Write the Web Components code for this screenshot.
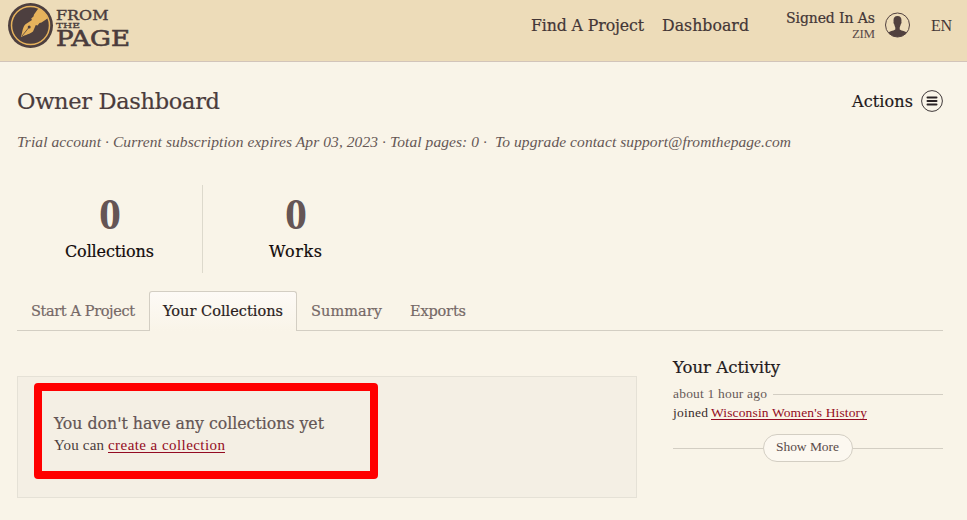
<!DOCTYPE html>
<html lang="en">
<head>
<meta charset="utf-8">
<title>Owner Dashboard</title>
<style>
html,body{margin:0;background:#f9f4e8}
body{width:967px;height:520px;overflow:hidden;color:#4a3c3c;font-family:"Liberation Serif",serif}
</style>
</head>
<body>
<owner-page></owner-page>
<script>
/* One line of text whose tracking is set so that it fills the width attribute. */
class FitText extends HTMLElement {
  connectedCallback() {
    const w = +this.getAttribute('w'), size = this.getAttribute('size'), lh = this.getAttribute('lh');
    const slab = this.getAttribute('slab');
    const family = slab === 'wide' ? '"DejaVu Serif",serif' : '"DejaVu Serif Condensed","DejaVu Serif",serif';
    const root = this.attachShadow({mode: 'open'});
    root.innerHTML = `<style>
      :host{display:block;flex:none;width:${w}px;height:${lh}px;line-height:${lh}px;font-size:${size}px;white-space:pre;
        ${slab !== null ? `font-family:${family};-webkit-text-stroke:.2px currentColor;` : ''}
        ${slab !== null && slab !== 'wide' ? 'font-stretch:condensed;' : ''}}
      span{display:inline-block}
      </style><span><slot></slot></span>`;
    const span = root.querySelector('span');
    const n = this.textContent.length;
    const natural = span.getBoundingClientRect().width;
    if (n > 1) span.style.letterSpacing = ((w - natural) / (n - 1)) + 'px';
  }
}

class SiteLogo extends HTMLElement {
  connectedCallback() {
    this.attachShadow({mode: 'open'}).innerHTML = `<style>
      :host{display:block;width:130px;height:50px}
      svg{display:block} text{font-family:"DejaVu Serif",serif;fill:#4a3c3c;stroke:#4a3c3c}
      </style>
      <svg width="130" height="50" viewBox="0 0 130 50">
        <circle cx="30.500" cy="25.500" r="22.500" fill="#4d3f3f"/>
        <circle cx="30.500" cy="25.500" r="19" fill="none" stroke="#e6b25c" stroke-width="1.500"/>
        <path d="M21 37C22.500 32 22.800 26.500 25.500 24.300L32 20L31.200 18.500L33.500 16.500L34 14.500L38.500 8.300A19 19 0 0 1 47.800 18.300L41.500 22.500L39.500 23L37.500 25.500L35.800 25L33 31.500C30.500 34 25.500 34.800 21 37Z" fill="#e6b25c"/>
        <path d="M22 36L29 27.300" stroke="#4d3f3f" stroke-width=".8"/><circle cx="29.200" cy="27" r="1.500" fill="#4d3f3f"/>
        <text x="56" y="19.500" font-size="13.500" stroke-width=".4" textLength="52.500" lengthAdjust="spacingAndGlyphs">FROM</text>
        <text x="56" y="28" font-size="8" stroke-width=".3" textLength="24" lengthAdjust="spacingAndGlyphs">THE</text>
        <text x="56" y="46" font-size="21.500" stroke-width=".6" textLength="74" lengthAdjust="spacingAndGlyphs">PAGE</text>
      </svg>`;
  }
}

class SiteHeader extends HTMLElement {
  connectedCallback() {
    this.attachShadow({mode: 'open'}).innerHTML = `<style>
      :host{display:flex;height:61px;background:#eddcb9;border-bottom:1px solid #d2c4ba;color:#433636}
      nav{display:flex;margin-left:401px;gap:18px;padding-top:13px}
      .user{display:flex;margin-left:37px;gap:10px;padding-top:8px}
      .who{display:flex;flex-direction:column;align-items:flex-end}
      .user svg{margin-top:4px;display:block}
      .zim{color:#5a4a48}
      .lang{margin-left:21px;padding-top:15px}
      </style>
      <site-logo></site-logo>
      <nav><fit-text slab w="113" size="17.5" lh="24">Find A Project</fit-text><fit-text slab w="87" size="17.5" lh="24">Dashboard</fit-text></nav>
      <div class="user"><div class="who"><fit-text slab="wide" w="89" size="14" lh="20">Signed In As</fit-text><fit-text class="zim" w="23" size="13" lh="12">ZIM</fit-text></div>
      <svg width="25" height="26" viewBox="0 0 25 26"><circle cx="12.500" cy="13" r="12" fill="none" stroke="#51413f"/>
      <path d="M12.500 4C15.800 4 16.800 6.300 16.400 9.500C16.800 10.800 16.200 12 15.700 12.500C15.400 14 14.900 14.800 14.700 15.500V17.500C17 18.900 20.500 19.200 21.700 20.700A12 12 0 0 1 3.300 20.700C4.500 19.200 8 18.900 10.300 17.500V15.500C10 14.800 9.600 14 9.300 12.500C8.800 12 8.200 10.800 8.600 9.500C8.200 6.300 9.200 4 12.500 4Z" fill="#51413f"/></svg></div>
      <fit-text class="lang" w="21" size="16" lh="22">EN</fit-text>`;
  }
}

class StatCell extends HTMLElement {
  connectedCallback() {
    this.attachShadow({mode: 'open'}).innerHTML = `<style>
      :host{display:flex;flex-direction:column;align-items:center;width:185px;height:88px;flex:none}
      b{font-size:44px;line-height:48px;height:48px;color:#655555;margin:6px 0 0 1px}
      ::slotted(fit-text){color:#120a0a;margin-top:1px}
      </style><b>${this.getAttribute('count')}</b><slot></slot>`;
  }
}

class TabItem extends HTMLElement {
  connectedCallback() {
    this.attachShadow({mode: 'open'}).innerHTML = `<style>
      :host{display:block;box-sizing:border-box;height:40px;padding:8px 13px 0;border:1px solid transparent;border-bottom:0;color:#756866}
      :host([active]){color:#2a1c1c;border-color:#d3cec3;border-radius:3px 3px 0 0;background:linear-gradient(#fdfaf6,#f9f4e8)}
      </style><slot></slot>`;
  }
}

class TabBar extends HTMLElement {
  connectedCallback() {
    this.attachShadow({mode: 'open'}).innerHTML = `<style>
      :host{display:flex;height:40px;background:linear-gradient(#d3cec3,#d3cec3) bottom/100% 1px no-repeat}
      </style><slot></slot>`;
  }
}

class EmptyPanel extends HTMLElement {
  connectedCallback() {
    this.attachShadow({mode: 'open'}).innerHTML = `<style>
      :host{display:block;box-sizing:border-box;width:620px;height:122px;border:1px solid #e5e1d6;background:#f4efe4;padding:6px 16px;flex:none}
      .mark{box-sizing:border-box;width:344px;height:96px;border:8px solid #f00;border-radius:4px;padding:20px 12px}
      .h{color:#635554}.row{display:flex;gap:4px}
      a{color:#930b22;border-bottom:1px solid #930b22;height:17px;display:block}
      </style>
      <div class="mark"><fit-text class="h" slab w="270" size="17.5" lh="24">You don't have any collections yet</fit-text>
      <div class="row"><fit-text w="50" size="15" lh="20">You can</fit-text><a><fit-text w="117" size="15" lh="20">create a collection</fit-text></a></div></div>`;
  }
}

class ActivityFeed extends HTMLElement {
  connectedCallback() {
    this.attachShadow({mode: 'open'}).innerHTML = `<style>
      :host{display:block;width:270px;margin-top:-20px}
      .h{color:#231a1c}
      .row{display:flex;align-items:center;color:#675a58}
      i{flex:1;height:1px;background:#d3cec3}
      .when{gap:6px;margin-top:4px}
      .what{display:flex;gap:3px;color:#3a2c2c}
      a{display:block;color:#930b22;border-bottom:1px solid #930b22;height:15px}
      .more{margin-top:12px}
      .pill{box-sizing:border-box;width:90px;height:28px;border:1px solid #d3cec3;border-radius:14px;background:#fcf8f0;padding:3px 12px;color:#5a4b4a}
      </style>
      <fit-text class="h" slab="wide" w="107" size="16.5" lh="24">Your Activity</fit-text>
      <div class="row when"><fit-text w="94" size="13.5" lh="20">about 1 hour ago</fit-text><i></i></div>
      <div class="what"><fit-text w="35" size="13.5" lh="18">joined</fit-text><a><fit-text w="156" size="13.5" lh="18">Wisconsin Women's History</fit-text></a></div>
      <div class="row more"><i></i><div class="pill"><fit-text w="63" size="13.5" lh="18">Show More</fit-text></div><i></i></div>`;
  }
}

class OwnerPage extends HTMLElement {
  connectedCallback() {
    this.attachShadow({mode: 'open'}).innerHTML = `<style>
      :host{display:block;height:520px}
      main{padding:24px 24px 0 17px}
      .title{display:flex;justify-content:space-between;height:30px}
      .title>fit-text{color:#4a3c3c}
      .act{display:flex;gap:8px;align-items:center;color:#1f181a}
      .act fit-text{margin-top:1px}
      .sub{font-style:italic;color:#655755;margin-top:16px}
      .stats{display:flex;margin-top:33px}
      .stats stat-cell+stat-cell{border-left:1px solid #ddd9cc}
      tab-bar{margin-top:18px}
      .cols{display:flex;gap:36px;margin-top:45px;align-items:flex-start}
      </style>
      <site-header></site-header>
      <main>
        <div class="title"><fit-text slab="wide" w="203" size="22.5" lh="30">Owner Dashboard</fit-text>
          <div class="act"><fit-text slab="wide" w="61" size="16" lh="26">Actions</fit-text>
          <svg width="22" height="22" viewBox="0 0 22 22"><circle cx="11" cy="11" r="10.400" fill="none" stroke="#40393a" stroke-width="1"/><path d="M6.500 7.500h9M6.500 11h9M6.500 14.500h9" stroke="#292224" stroke-width="2" stroke-linecap="round"/></svg></div></div>
        <fit-text class="sub" w="774" size="15.5" lh="20">Trial account · Current subscription expires Apr 03, 2023 · Total pages: 0 ·  To upgrade contact support@fromthepage.com</fit-text>
        <div class="stats"><stat-cell count="0"><fit-text slab="wide" w="89" size="16" lh="24">Collections</fit-text></stat-cell>
          <stat-cell count="0"><fit-text slab="wide" w="53" size="16" lh="24">Works</fit-text></stat-cell></div>
        <tab-bar>
          <tab-item><fit-text slab="wide" w="104" size="14.5" lh="22">Start A Project</fit-text></tab-item>
          <tab-item active><fit-text slab="wide" w="120" size="14.5" lh="22">Your Collections</fit-text></tab-item>
          <tab-item><fit-text slab="wide" w="71" size="14.5" lh="22">Summary</fit-text></tab-item>
          <tab-item><fit-text slab="wide" w="56" size="14.5" lh="22">Exports</fit-text></tab-item>
        </tab-bar>
        <div class="cols"><empty-panel></empty-panel><activity-feed></activity-feed></div>
      </main>`;
  }
}

customElements.define('owner-page', OwnerPage);
customElements.define('site-header', SiteHeader);
customElements.define('site-logo', SiteLogo);
customElements.define('stat-cell', StatCell);
customElements.define('tab-bar', TabBar);
customElements.define('tab-item', TabItem);
customElements.define('empty-panel', EmptyPanel);
customElements.define('activity-feed', ActivityFeed);
customElements.define('fit-text', FitText);
</script>
</body>
</html>
